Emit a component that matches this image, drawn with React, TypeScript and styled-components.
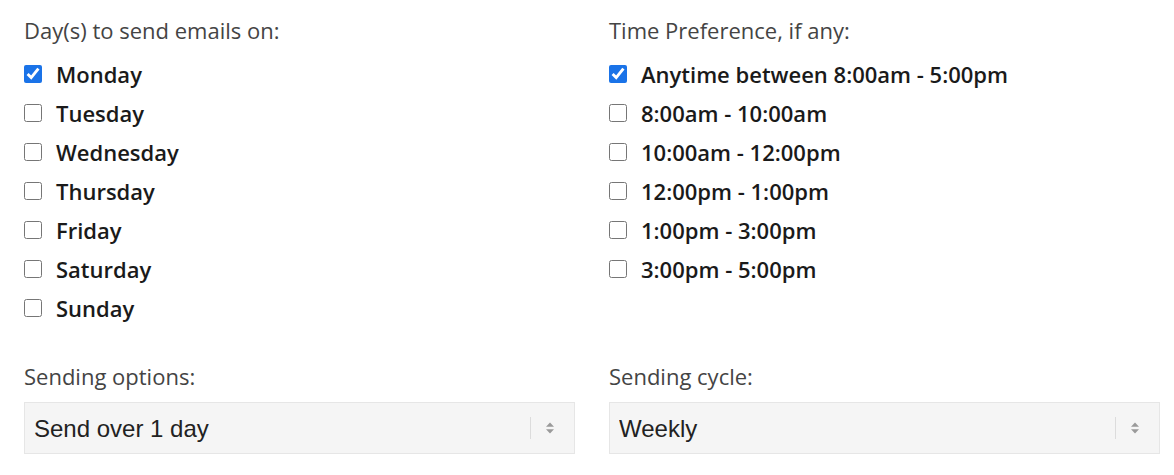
import React, { FC } from "react";
import styled, { createGlobalStyle } from "styled-components";

const GlobalStyle = createGlobalStyle`
  html, body {
    margin: 0;
    padding: 0;
    background: #ffffff;
  }
`;

const Page = styled.div`
  display: grid;
  grid-template-columns: 551px 551px;
  column-gap: 34px;
  padding: 15px 14px 0 24px;
  font-family: "Open Sans", sans-serif;
`;

const Column = styled.div`
  display: flex;
  flex-direction: column;
`;

const Label = styled.div`
  font-size: 22px;
  line-height: 30px;
  color: #444444;
  margin-bottom: 9px;
`;

const OptionList = styled.div`
  display: flex;
  flex-direction: column;
  height: 273px;
  margin-bottom: 34px;
`;

const Option = styled.label`
  display: flex;
  align-items: center;
  height: 39px;
  font-size: 22px;
  font-weight: 600;
  color: #1a1a1a;
`;

const Checkbox = styled.input.attrs({ type: "checkbox" })`
  width: 18px;
  height: 18px;
  margin: 0 14px 0 0;
  accent-color: #1a73e8;
`;

const SelectBox = styled.div`
  display: flex;
  align-items: center;
  height: 52px;
  margin-top: 2px;
  background: #f5f5f5;
  border: 1px solid #e6e6e6;
  box-sizing: border-box;
`;

const NativeSelect = styled.select`
  flex: 1;
  appearance: none;
  border: none;
  background: transparent;
  font-family: "Liberation Sans", Arial, sans-serif;
  font-size: 24px;
  color: #222222;
  padding: 0 0 0 9px;
  height: 100%;
  outline: none;
`;

const Divider = styled.span`
  width: 1px;
  height: 22px;
  background: #dcdcdc;
`;

const Arrows = styled.span`
  display: flex;
  width: 38px;
  justify-content: center;
  padding-right: 5px;
`;

const ArrowIcon: FC = () => (
  <svg width="10" height="14" viewBox="0 0 10 14">
    <path d="M5 1.5 L9 5.8 H1 Z M5 12.5 L9 8.2 H1 Z" fill="#9a9a9a" />
  </svg>
);

interface GroupProps {
  title: string;
  options: string[];
  checked: number;
  selectTitle: string;
  selectValue: string;
}

const Group: FC<GroupProps> = ({ title, options, checked, selectTitle, selectValue }) => (
  <Column>
    <Label>{title}</Label>
    <OptionList>
      {options.map((o, i) => (
        <Option key={o}>
          <Checkbox defaultChecked={i === checked} />
          {o}
        </Option>
      ))}
    </OptionList>
    <Label>{selectTitle}</Label>
    <SelectBox>
      <NativeSelect defaultValue={selectValue}>
        <option>{selectValue}</option>
      </NativeSelect>
      <Divider />
      <Arrows>
        <ArrowIcon />
      </Arrows>
    </SelectBox>
  </Column>
);

const App: FC = () => (
  <>
    <GlobalStyle />
    <Page>
      <Group
        title="Day(s) to send emails on:"
        options={["Monday", "Tuesday", "Wednesday", "Thursday", "Friday", "Saturday", "Sunday"]}
        checked={0}
        selectTitle="Sending options:"
        selectValue="Send over 1 day"
      />
      <Group
        title="Time Preference, if any:"
        options={[
          "Anytime between 8:00am - 5:00pm",
          "8:00am - 10:00am",
          "10:00am - 12:00pm",
          "12:00pm - 1:00pm",
          "1:00pm - 3:00pm",
          "3:00pm - 5:00pm",
        ]}
        checked={0}
        selectTitle="Sending cycle:"
        selectValue="Weekly"
      />
    </Page>
  </>
);

export default App;
